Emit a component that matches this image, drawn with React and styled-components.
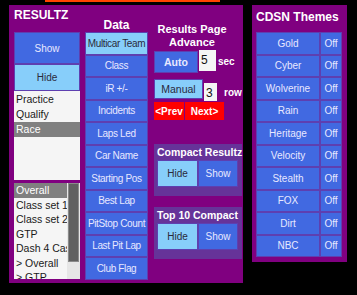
import React from 'react';
import styled, { createGlobalStyle } from 'styled-components';

const colors = {
  black: '#000000',
  purple: '#800080',
  panel: '#663399',
  blue: '#4169E1',
  lightBlue: '#87CEFA',
  red: '#FF0000',
  orange: '#FF4500',
  edge: '#5E3FB0',
  list: '#F5F5F5',
  selected: '#808080',
  text: '#E8E8FF',
  darkText: '#2A2A3A',
};

const FONT = '"Liberation Sans", Arial, sans-serif';

const GlobalStyle = createGlobalStyle`
  html, body {
    margin: 0;
    padding: 0;
    background: ${colors.black};
    font-family: ${FONT};
  }
`;

const Screen = styled.div`
  width: 357px;
  height: 295px;
  overflow: hidden;
  background: ${colors.black};
`;

const TopStrip = styled.div`
  margin-left: 45px;
  width: 175px;
  height: 2px;
  background: ${colors.orange};
`;

const Row = styled.div`
  display: flex;
  align-items: flex-start;
  gap: 9px;
  margin-top: 3px;
  padding-left: 9px;
`;

const MainPanel = styled.div`
  display: flex;
  width: 229px;
  height: 278px;
  padding-left: 5px;
  background: ${colors.purple};
`;

const Column = styled.div`
  display: flex;
  flex-direction: column;
  width: ${p => p.$width}px;
  margin-left: ${p => p.$gap || 0}px;
`;

const Heading = styled.div`
  height: ${p => p.$height || 27}px;
  width: ${p => (p.$width ? `${p.$width}px` : 'auto')};
  box-sizing: border-box;
  padding-top: ${p => p.$top || 0}px;
  color: #ffffff;
  font-weight: 700;
  font-size: ${p => p.$size || 11}px;
  line-height: ${p => p.$line || 13}px;
  text-align: ${p => p.$align || 'left'};
`;

const Button = styled.div`
  display: flex;
  align-items: center;
  justify-content: center;
  box-sizing: border-box;
  width: ${p => (p.$width ? `${p.$width}px` : '100%')};
  height: ${p => p.$height}px;
  margin-left: ${p => p.$gap || 0}px;
  background: ${p => (p.$light ? colors.lightBlue : p.$red ? colors.red : colors.blue)};
  color: ${p => (p.$light ? colors.darkText : p.$red ? '#ffffff' : colors.text)};
  border: 1px solid ${p => (p.$red ? colors.red : colors.edge)};
  font-size: ${p => p.$size || 10}px;
  font-weight: ${p => (p.$bold ? 700 : 400)};
  letter-spacing: ${p => (p.$tight ? '-0.35px' : 'normal')};
  white-space: nowrap;
  overflow: hidden;
`;

const ListBox = styled.div`
  display: flex;
  height: ${p => p.$height}px;
  margin-top: ${p => p.$top || 0}px;
  background: ${colors.list};
  overflow: hidden;
`;

const Items = styled.div`
  flex: 1;
  min-width: 0;
  padding-top: ${p => p.$pad || 0}px;
  overflow: hidden;
`;

const Item = styled.div`
  height: ${p => p.$height}px;
  line-height: ${p => p.$height}px;
  padding-left: 2px;
  font-size: 10.5px;
  white-space: nowrap;
  overflow: hidden;
  background: ${p => (p.$selected ? colors.selected : 'transparent')};
  color: ${p => (p.$selected ? '#ffffff' : '#1a1a1a')};
`;

const ScrollTrack = styled.div`
  width: 11px;
  padding: 0 1px;
  background: #e6e6e6;
`;

const ScrollThumb = styled.div`
  height: 79px;
  box-sizing: border-box;
  background: #606060;
  border: 1px solid #8a8a8a;
`;

const Stack = styled.div`
  display: flex;
  flex-direction: column;
`;

const InputRow = styled.div`
  display: flex;
  align-items: flex-start;
  margin-top: ${p => p.$top || 0}px;
`;

const NumberBox = styled.div`
  box-sizing: border-box;
  width: ${p => p.$width}px;
  height: ${p => p.$height}px;
  margin-left: 1px;
  margin-top: ${p => p.$offset || 0}px;
  padding: 3px 0 0 2px;
  background: ${colors.list};
  color: #111;
  font-size: 12px;
`;

const Unit = styled.div`
  margin-left: ${p => p.$gap}px;
  margin-top: ${p => p.$offset}px;
  color: #ffffff;
  font-weight: 700;
  font-size: 10px;
`;

const Pair = styled.div`
  display: flex;
`;

const ToggleBox = styled.div`
  box-sizing: border-box;
  width: 88px;
  height: 52px;
  margin-top: ${p => p.$top}px;
  padding: 0 4px 0 3px;
  background: ${colors.panel};
`;

const ToggleTitle = styled.div`
  height: 16px;
  line-height: 16px;
  color: #ffffff;
  font-weight: 700;
  font-size: 10.5px;
  text-align: center;
  white-space: nowrap;
`;

const ThemePanel = styled.div`
  width: 95px;
  height: 257px;
  box-sizing: border-box;
  padding-left: 4px;
  background: ${colors.purple};
`;

const ThemeRow = styled.div`
  display: flex;
  width: 86px;
`;

const dataButtons = [
  'Class', 'iR +/-', 'Incidents', 'Laps Led', 'Car Name', 'Starting Pos',
  'Best Lap', 'PitStop Count', 'Last Pit Lap', 'Club Flag',
];

const sessions = ['Practice', 'Qualify', 'Race'];
const classes = ['Overall', 'Class set 1', 'Class set 2', 'GTP', 'Dash 4 Cash', '> Overall', '> GTP'];
const themes = ['Gold', 'Cyber', 'Wolverine', 'Rain', 'Heritage', 'Velocity', 'Stealth', 'FOX', 'Dirt', 'NBC'];

const Toggle = ({ title, top }) => (
  <ToggleBox $top={top}>
    <ToggleTitle>{title}</ToggleTitle>
    <Pair>
      <Button $light $width={41} $height={27}>Hide</Button>
      <Button $width={40} $height={27}>Show</Button>
    </Pair>
  </ToggleBox>
);

export default function App() {
  return (
    <Screen>
      <GlobalStyle />
      <TopStrip />
      <Row>
        <MainPanel>
          <Column $width={66}>
            <Heading $top={4} $size={12}>RESULTZ</Heading>
            <Button $height={32}>Show</Button>
            <Button $light $height={27}>Hide</Button>
            <ListBox $height={89}>
              <Items $pad={1}>
                {sessions.map(s => (
                  <Item key={s} $height={15} $selected={s === 'Race'}>{s}</Item>
                ))}
              </Items>
            </ListBox>
            <ListBox $height={96} $top={3}>
              <Items>
                {classes.map(c => (
                  <Item key={c} $height={14.5} $selected={c === 'Overall'}>{c}</Item>
                ))}
              </Items>
              <ScrollTrack>
                <ScrollThumb />
              </ScrollTrack>
            </ListBox>
          </Column>

          <Column $width={63} $gap={5}>
            <Heading $top={14} $size={12} $align="center">Data</Heading>
            <Stack>
              <Button $light $tight $height={22.5}>Multicar Team</Button>
              {dataButtons.map(b => (
                <Button key={b} $tight $height={22.5}>{b}</Button>
              ))}
            </Stack>
          </Column>

          <Column $width={88} $gap={6}>
            <Heading $height={46} $top={18} $width={76} $align="center">
              Results Page<br />Advance
            </Heading>
            <InputRow>
              <Button $width={44} $height={22} $bold $size={10.5}>Auto</Button>
              <NumberBox $width={17} $height={21} $offset={-1}>5</NumberBox>
              <Unit $gap={2} $offset={5}>sec</Unit>
            </InputRow>
            <InputRow $top={6}>
              <Button $light $width={49} $height={20} $size={10.5}>Manual</Button>
              <NumberBox $width={13} $height={18} $offset={4}>3</NumberBox>
              <Unit $gap={7} $offset={8}>row</Unit>
            </InputRow>
            <InputRow $top={1}>
              <Button $red $bold $width={30} $height={18}>&lt;Prev</Button>
              <Button $red $bold $width={39} $height={18} $gap={1}>Next&gt;</Button>
            </InputRow>
            <Toggle title="Compact Resultz" top={24} />
            <Toggle title="Top 10 Compact" top={11} />
          </Column>
        </MainPanel>

        <ThemePanel>
          <Heading $top={5} $size={12} $line={14}>CDSN Themes</Heading>
          {themes.map(t => (
            <ThemeRow key={t}>
              <Button $width={64} $height={22.5}>{t}</Button>
              <Button $width={22} $height={22.5}>Off</Button>
            </ThemeRow>
          ))}
        </ThemePanel>
      </Row>
    </Screen>
  );
}
